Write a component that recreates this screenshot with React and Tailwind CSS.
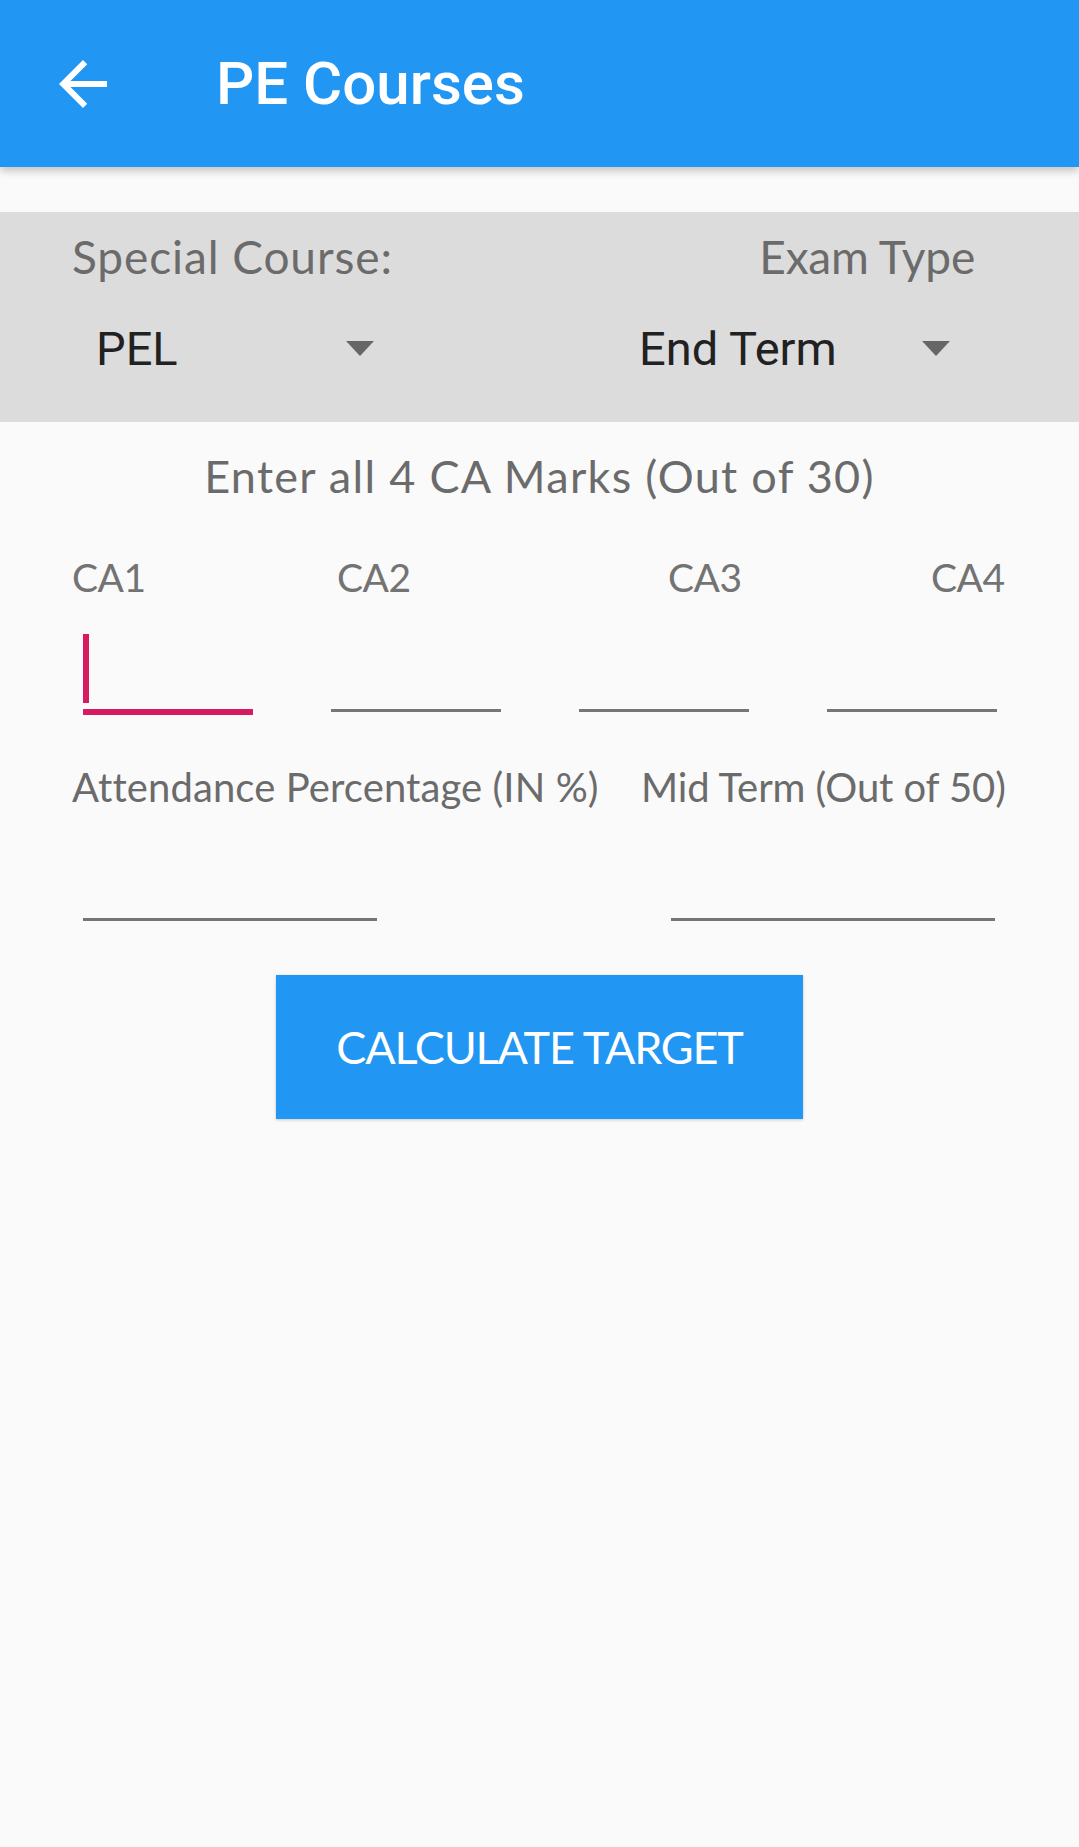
import React from 'react';

const label = "font-['Lato','Liberation_Sans',sans-serif] text-[#6b6b6b]";

const BackArrow = () => (
    <svg viewBox="0 0 24 24" className="w-[72px] h-[72px]" fill="#ffffff">
        <path d="M20 11H7.83l5.59-5.59L12 4l-8 8 8 8 1.41-1.41L7.83 13H20v-2z" />
    </svg>
);

const Caret = () => (
    <svg viewBox="0 0 28 15" className="w-[28px] h-[15px]" fill="#666666">
        <path d="M0 0h28L14 15z" />
    </svg>
);

const Spinner = ({ value, className }) => (
    <div className={`flex items-center justify-between ${className}`}>
        <span className="font-['Roboto',sans-serif] text-[47px] leading-none text-[#212121]">{value}</span>
        <Caret />
    </div>
);

export default function App() {
    return (
        <div className="w-[1079px] h-[1847px] bg-[#fafafa] overflow-hidden">
            {/* toolbar */}
            <header className="h-[167px] bg-[#2196f3] flex items-center shadow-[0_4px_8px_rgba(0,0,0,0.22)] relative z-10">
                <div className="ml-[47px]">
                    <BackArrow />
                </div>
                <h1 className="ml-[97px] font-['Roboto',sans-serif] font-medium text-[60px] leading-none text-white">PE Courses</h1>
            </header>

            {/* course / exam selectors */}
            <section className="mt-[45px] h-[210px] bg-[#dcdcdc] pt-[22px]">
                <div className="flex justify-between pl-[72px] pr-[104px]">
                    <span className={`${label} text-[46px] leading-none tracking-[0.9px]`}>Special Course:</span>
                    <span className={`${label} text-[46px] leading-none tracking-[-0.2px]`}>Exam Type</span>
                </div>
                <div className="flex mt-[45px] pl-[96px]">
                    <Spinner value="PEL" className="w-[278px]" />
                    <Spinner value="End Term" className="ml-[265px] w-[311px]" />
                </div>
            </section>

            <p className={`${label} text-[45px] leading-none text-center mt-[32px] tracking-[1.3px]`}>Enter all 4 CA Marks (Out of 30)</p>

            {/* CA inputs */}
            <div className="flex mt-[59px] pl-[72px]">
                <span className={`${label} w-[265px] text-[39px] leading-none text-[#737373] tracking-[-0.5px]`}>CA1</span>
                <span className={`${label} w-[331px] text-[39px] leading-none text-[#737373] tracking-[-0.5px]`}>CA2</span>
                <span className={`${label} w-[263px] text-[39px] leading-none text-[#737373] tracking-[-0.5px]`}>CA3</span>
                <span className={`${label} text-[39px] leading-none text-[#737373] tracking-[-0.5px]`}>CA4</span>
            </div>
            <div className="flex items-start gap-[78px] pl-[83px] mt-[15px]">
                <div className="w-[170px] h-[103px] border-b-[6px] border-[#d81b60]">
                    <div className="w-[6px] h-[69px] mt-[22px] bg-[#d81b60]" />
                </div>
                <div className="w-[170px] h-[100px] border-b-[3px] border-[#757575]" />
                <div className="w-[170px] h-[100px] border-b-[3px] border-[#757575]" />
                <div className="w-[170px] h-[100px] border-b-[3px] border-[#757575]" />
            </div>

            {/* attendance / mid term */}
            <div className="flex mt-[52px] pl-[72px]">
                <span className={`${label} w-[569px] text-[40px] leading-none tracking-[0.1px]`}>Attendance Percentage (IN %)</span>
                <span className={`${label} text-[40px] leading-none tracking-[-0.1px]`}>Mid Term (Out of 50)</span>
            </div>
            <div className="flex items-start mt-[13px] pl-[83px]">
                <div className="w-[294px] h-[101px] border-b-[3px] border-[#757575]" />
                <div className="w-[324px] h-[101px] border-b-[3px] border-[#757575] ml-[294px]" />
            </div>

            <button className="block mx-auto mt-[54px] w-[527px] h-[144px] bg-[#2196f3] shadow-[0_1px_3px_rgba(0,0,0,0.2)] font-['Lato',sans-serif] text-[45px] leading-none tracking-[-1.2px] text-white">
                CALCULATE TARGET
            </button>
        </div>
    );
}
